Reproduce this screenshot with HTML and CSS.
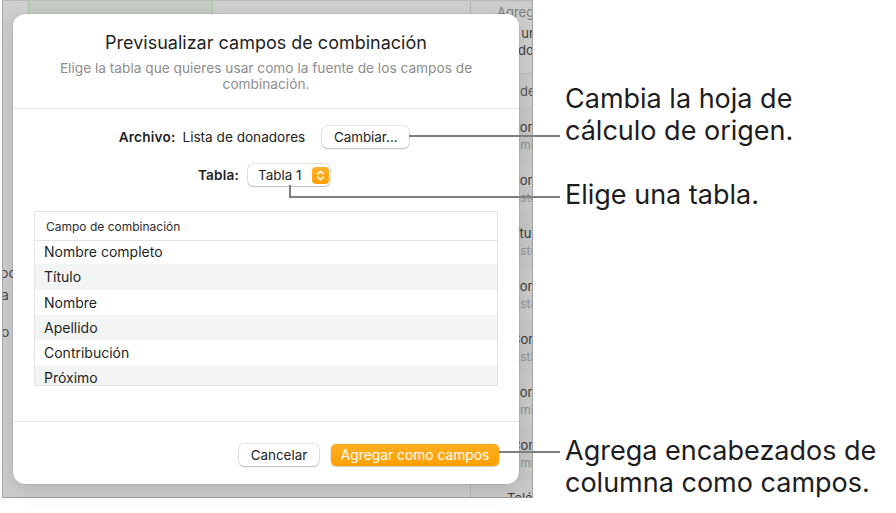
FILE: index.html
```html
<!DOCTYPE html>
<html lang="es">
<head>
<meta charset="utf-8">
<title>Previsualizar campos de combinación</title>
<link rel="stylesheet" href="styles.css">
</head>
<body>
<div class="stage">
  <div class="appwin">
    <div class="doc">
      <div class="doc-top">
        <div class="cell-green"></div>
      </div>
      <div class="doc-left">
        <div class="frag fr1">Doc</div>
        <div class="frag fr2">a</div>
        <div class="frag fr3">o</div>
      </div>
    </div>
    <aside class="sidebar">
      <div class="sb-head">
        <div class="sb-t1">Agregar</div>
        <div class="sb-t2">de un campo</div>
        <div class="sb-t3">y dos</div>
      </div>
      <div class="sb-r0">de</div>
      <div class="sb-row"><div class="lab">Nombre</div><div class="val">Emilia</div></div>
      <div class="sb-row"><div class="lab">Nombre</div><div class="val">Estela</div></div>
      <div class="sb-row"><div class="lab lab-t">Título</div><div class="val">Estudio</div></div>
      <div class="sb-row"><div class="lab">Nombre</div><div class="val">Estado</div></div>
      <div class="sb-row"><div class="lab lab-c">Contribución</div><div class="val">Estimado</div></div>
      <div class="sb-row"><div class="lab">Nombre</div><div class="val">Emisión</div></div>
      <div class="sb-row"><div class="lab lab-c">Correo</div><div class="val">Emilio</div></div>
      <div class="sb-row sb-last"><div class="lab lab-tel">Teléfono</div></div>
    </aside>
  </div>

  <div class="dialog">
    <div class="dlg-head">
      <h1 class="dlg-title">Previsualizar campos de combinación</h1>
      <p class="dlg-sub">Elige la tabla que quieres usar como la fuente de los campos de combinación.</p>
    </div>
    <div class="dlg-body">
      <div class="frow">
        <span class="flabel">Archivo:</span>
        <span class="fvalue">Lista de donadores</span>
        <button class="btn btn-change">Cambiar...</button>
      </div>
      <div class="frow frow-2">
        <span class="flabel">Tabla:</span>
        <div class="popup">
          <span class="popup-text">Tabla 1</span>
          <span class="stepper">
            <svg width="17" height="17" viewBox="0 0 17 17"><path d="M5.6 7 L8.5 4.2 L11.4 7" fill="none" stroke="#fff" stroke-width="1.5" stroke-linecap="round" stroke-linejoin="round"/><path d="M5.6 10 L8.5 12.8 L11.4 10" fill="none" stroke="#fff" stroke-width="1.5" stroke-linecap="round" stroke-linejoin="round"/></svg>
          </span>
        </div>
      </div>
      <div class="tbl">
        <div class="tbl-head">Campo de combinación</div>
        <div class="tbl-rows">
          <div class="tbl-inner">
            <div class="tr">Nombre completo</div>
            <div class="tr">Título</div>
            <div class="tr">Nombre</div>
            <div class="tr">Apellido</div>
            <div class="tr">Contribución</div>
            <div class="tr">Próximo</div>
          </div>
        </div>
      </div>
    </div>
    <div class="dlg-foot">
      <button class="btn btn-cancel">Cancelar</button>
      <button class="btn btn-primary">Agregar como campos</button>
    </div>
  </div>

  <div class="annot">
    <div class="ln ln1"></div>
    <div class="ln ln2v"></div>
    <div class="ln ln2h"></div>
    <div class="ln ln3"></div>
    <div class="note n1">Cambia la hoja de<br>cálculo de origen.</div>
    <div class="note n2">Elige una tabla.</div>
    <div class="note n3">Agrega encabezados de<br>columna como campos.</div>
  </div>
</div>
</body>
</html>
```

FILE: styles.css
```css
* { box-sizing: border-box; }
html, body { margin: 0; padding: 0; background: #fff; }
body {
  font-family: Inter, "Noto Sans", "Liberation Sans", sans-serif;
  color: #1f1f1f;
  width: 896px;
  height: 513px;
  overflow: hidden;
}
.stage {
  position: relative;
  width: 896px;
  height: 513px;
}

/* background app window (dimmed) */
.appwin {
  margin-left: 2px;
  width: 531px;
  height: 498px;
  display: flex;
  background: #cdcdcd;
  border-left: 1px solid #a9a9a9;
  border-right: 1px solid #a3a3a3;
  border-bottom: 1px solid #9f9f9f;
  border-top: 1px solid #b9b9b9;
  overflow: hidden;
}
.doc {
  flex: 1;
  display: flex;
  flex-direction: column;
  overflow: hidden;
}
.doc-top {
  height: 13px;
  display: flex;
  background: #cfcfcf;
}
.cell-green {
  margin-left: 25px;
  width: 185px;
  background: #c4ccc3;
  border-left: 1px solid #a7c6a5;
  border-right: 1px solid #a7c6a5;
}
.doc-left {
  padding-top: 250px;
  font-size: 14px;
  line-height: 18px;
  color: #4a4a4a;
}
.frag { white-space: nowrap; }
.fr1 { margin-left: -13px; }
.fr2 { margin-top: 4px; margin-left: -2px; }
.fr3 { margin-top: 19px; margin-left: -2px; }

.sidebar {
  width: 62px;
  border-left: 1px solid #b4b4b4;
  background: #cacaca;
  overflow: hidden;
  white-space: nowrap;
  font-size: 13px;
}
.sb-head {
  height: 71px;
  border-bottom: 1px solid #bebebe;
  background: #cecece;
}
.sb-t1 { padding-left: 26px; margin-top: 2px; line-height: 18px; color: #7d7d7d; }
.sb-t2 { padding-left: 31px; margin-top: 4px; line-height: 17px; color: #3d3d3d; }
.sb-t3 { padding-left: 36px; line-height: 17px; color: #3d3d3d; }
.sb-r0 {
  height: 35px;
  line-height: 35px;
  padding-left: 49px;
  color: #555;
  border-bottom: 1px solid #c2c2c2;
}
.sb-row {
  height: 53px;
  padding-top: 9px;
  border-bottom: 1px solid #c3c3c3;
}
.sb-row:nth-child(odd) { background: #c7c7c7; }
.lab { line-height: 18px; color: #3a3a3a; padding-left: 39px; }
.lab-t { padding-left: 37px; }
.lab-c { padding-left: 40px; }
.lab-tel { padding-left: 36px; }
.val { line-height: 18px; color: #929292; font-size: 12px; padding-left: 42px; }

/* dialog */
.dialog {
  position: absolute;
  left: 13px;
  top: 14px;
  width: 506px;
  height: 470px;
  background: #fff;
  border-radius: 12px;
  box-shadow: 0 0 0 0.5px rgba(0,0,0,0.12), 0 6px 20px rgba(0,0,0,0.12);
  display: flex;
  flex-direction: column;
  overflow: hidden;
}
.dlg-head {
  padding: 18px 30px 16px;
  text-align: center;
  border-bottom: 1px solid #e8e8e8;
}
.dlg-title {
  margin: 0;
  font-size: 18px;
  line-height: 22px;
  font-weight: 400;
  color: #1f1f1f;
}
.dlg-sub {
  margin: 6px 0 0;
  font-size: 13.7px;
  line-height: 16px;
  color: #8d8d8d;
}
.dlg-body {
  flex: 1;
  padding: 17px 20px 0 21px;
}
.frow {
  height: 22px;
  display: flex;
  align-items: center;
  justify-content: center;
  padding-right: 5px;
  font-size: 13.6px;
}
.frow-2 { margin-top: 16px; }
.flabel { font-weight: 600; color: #1f1f1f; letter-spacing: 0.2px; }
.fvalue { margin-left: 7px; margin-right: 17px; color: #222; }
.frow-2 .flabel { margin-right: 9px; }

.btn {
  font-family: inherit;
  font-size: 13.4px;
  height: 22px;
  border: none;
  border-radius: 5px;
  background: #fff;
  color: #222;
  padding: 0;
  box-shadow: 0 0 0 0.5px rgba(0,0,0,0.2), 0 1px 1.5px rgba(0,0,0,0.18);
}
.btn-change { width: 87px; }
.popup {
  width: 82px;
  height: 22px;
  border-radius: 5px;
  background: #fff;
  box-shadow: 0 0 0 0.5px rgba(0,0,0,0.2), 0 1px 1.5px rgba(0,0,0,0.18);
  display: flex;
  align-items: center;
  padding-left: 10px;
  padding-right: 1px;
}
.popup-text { flex: 1; color: #222; font-size: 13.4px; }
.stepper {
  width: 17px;
  height: 17px;
  border-radius: 4px;
  background: linear-gradient(#ffb12a, #ff9f04);
  display: flex;
}

.tbl {
  margin-top: 25px;
  width: 464px;
  height: 175px;
  border: 1px solid #e4e4e4;
  overflow: hidden;
}
.tbl-head {
  height: 29px;
  line-height: 29px;
  padding-left: 11px;
  font-size: 12px;
  color: #2e2e2e;
  border-bottom: 1px solid #e2e2e2;
}
.tbl-rows {
  height: 144px;
  overflow: hidden;
}
.tbl-inner { margin-top: -2px; }
.tr {
  height: 25.3px;
  line-height: 25.3px;
  padding-left: 9px;
  font-size: 14px;
  color: #1f1f1f;
}
.tr:nth-child(even) { background: #f3f4f4; }

.dlg-foot {
  border-top: 1px solid #e8e8e8;
  padding: 22px 20px 18px;
  display: flex;
  justify-content: flex-end;
  gap: 12px;
}
.btn-cancel { width: 80px; }
.btn-primary {
  width: 168px;
  font-size: 13.8px;
  color: #fff;
  background: linear-gradient(#ffae22, #ffa000);
  box-shadow: 0 0 0 0.5px rgba(200,120,0,0.3), 0 1px 1.5px rgba(0,0,0,0.15);
}

/* annotations */
.ln { position: absolute; background: #7f7f7f; }
.ln1 { left: 409px; top: 135px; width: 151px; height: 2px; }
.ln2v { left: 289px; top: 185px; width: 2px; height: 13px; }
.ln2h { left: 289px; top: 196px; width: 271px; height: 2px; }
.ln3 { left: 499px; top: 451px; width: 61px; height: 2px; }
.note {
  position: absolute;
  left: 565px;
  font-size: 27px;
  line-height: 32px;
  color: #1d1d1f;
  white-space: nowrap;
}
.n1 { top: 83px; }
.n2 { top: 179px; }
.n3 { top: 435px; }
```
